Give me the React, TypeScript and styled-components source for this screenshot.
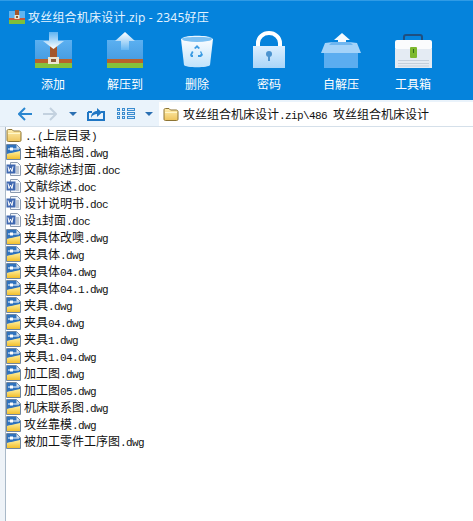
import React from 'react';
import styled, { createGlobalStyle } from 'styled-components';

const GlobalStyle = createGlobalStyle`
  html, body {
    margin: 0;
    padding: 0;
    background: #ffffff;
  }
`;

const Window = styled.div`
  width: 473px;
  height: 521px;
  overflow: hidden;
  display: flex;
  flex-direction: column;
  font-family: 'Noto Sans CJK SC', 'Liberation Sans', sans-serif;
`;

const Header = styled.header`
  height: 100px;
  background: #0583dc;
  border-top: 1px solid #2f9be6;
  box-sizing: border-box;
  display: flex;
  flex-direction: column;
`;

const TitleBar = styled.div`
  height: 28px;
  padding: 4px 0 0 9px;
  box-sizing: border-box;
  display: flex;
  align-items: center;
  gap: 3px;
  color: #e6f4ff;
  font-size: 12px;
  letter-spacing: 0.2px;
  font-family: 'Open Sans', 'Noto Sans CJK SC', sans-serif;
`;

const Tools = styled.div`
  display: flex;
  padding-left: 17px;
  margin-top: -1px;
`;

const Tool = styled.div`
  width: 72px;
  display: flex;
  flex-direction: column;
  align-items: center;
  color: #ffffff;
  font-size: 12px;
  line-height: 16px;
`;

const ToolIcon = styled.svg`
  display: block;
  width: 48px;
  height: 44px;
  margin-bottom: 4px;
`;

const NavBar = styled.nav`
  height: 27px;
  background: #eaf3fb;
  border-bottom: 1px solid #d5e0ea;
  box-sizing: border-box;
  display: flex;
  align-items: center;
  padding: 1px 0 0 18px;
`;

const NavIcon = styled.svg<{ $gap: number }>`
  display: block;
  flex: none;
  margin-right: ${(p) => p.$gap}px;
`;

const AddressBox = styled.div`
  flex: 1;
  height: 24px;
  background: #ffffff;
  display: flex;
  align-items: center;
  padding-left: 4px;
  gap: 4px;
  font-size: 12px;
  color: #111111;
  white-space: nowrap;
`;

const Body = styled.main`
  flex: 1;
  display: flex;
`;

const Gutter = styled.div`
  width: 5px;
  flex: none;
  background: #eef3f8;
  border-right: 1px solid #a9b9c8;
`;

const FileList = styled.ul`
  list-style: none;
  margin: 0;
  padding: 0;
  display: flex;
  flex-direction: column;
`;

const FileRow = styled.li`
  height: 17px;
  box-sizing: border-box;
  padding-bottom: 2px;
  display: flex;
  align-items: center;
  gap: 3px;
  font-size: 12px;
  color: #111111;
  white-space: nowrap;
`;

const Latin = styled.span`
  font-family: 'Liberation Mono', monospace;
  font-size: 11px;
  letter-spacing: -0.6px;
`;

const FileGlyph = styled.svg`
  display: block;
  flex: none;
  width: 15px;
  height: 16px;
`;

const Gradients = () => (
  <svg width="0" height="0" style={{ position: 'absolute' }}>
    <defs>
      <linearGradient id="arrowDown" x1="0" y1="0" x2="0" y2="1">
        <stop offset="0" stopColor="#5fb4f2" />
        <stop offset="1" stopColor="#ffffff" />
      </linearGradient>
      <linearGradient id="arrowUp" x1="0" y1="0" x2="0" y2="1">
        <stop offset="0" stopColor="#ffffff" />
        <stop offset="1" stopColor="#66b6f2" />
      </linearGradient>
      <linearGradient id="bodyBlue" x1="0" y1="0" x2="0" y2="1">
        <stop offset="0" stopColor="#5bb0f1" />
        <stop offset="1" stopColor="#3f95dc" />
      </linearGradient>
      <linearGradient id="lockBlue" x1="0" y1="0" x2="0" y2="1">
        <stop offset="0" stopColor="#dcefff" />
        <stop offset="1" stopColor="#a9d5f8" />
      </linearGradient>
      <linearGradient id="binBlue" x1="0" y1="0" x2="0" y2="1">
        <stop offset="0" stopColor="#ffffff" />
        <stop offset="1" stopColor="#bfe2fb" />
      </linearGradient>
      <linearGradient id="folderGold" x1="0" y1="0" x2="0" y2="1">
        <stop offset="0" stopColor="#ffeeb0" />
        <stop offset="1" stopColor="#eec45c" />
      </linearGradient>
      <linearGradient id="dwgGold" x1="0" y1="0" x2="0" y2="1">
        <stop offset="0" stopColor="#fff0a0" />
        <stop offset="1" stopColor="#f2bf2c" />
      </linearGradient>
    </defs>
  </svg>
);

const AddIcon = () => (
  <ToolIcon viewBox="0 0 48 44">
    <path d="M6 12h37v28H6z" fill="url(#bodyBlue)" />
    <path d="M6 31h37v4H6z" fill="#b9622c" />
    <path d="M6 35h37v5H6z" fill="#86c23c" />
    <path d="M21 16l3.500 3 3.500-3v16h-7z" fill="#a4562a" />
    <path d="M19 29h11v7H19z" fill="#efe6d2" />
    <path d="M22 31h5v3h-5z" fill="#8a5a38" />
    <path d="M20 4h9v9h6L24.500 21 14 13h6z" fill="url(#arrowDown)" />
  </ToolIcon>
);

const ExtractIcon = () => (
  <ToolIcon viewBox="0 0 48 44">
    <path d="M6 12h36v28H6z" fill="url(#bodyBlue)" />
    <path d="M6 31h36v4H6z" fill="#b9622c" />
    <path d="M6 35h36v5H6z" fill="#86c23c" />
    <path d="M24 4l10 9h-6v9h-8v-9h-6z" fill="url(#arrowUp)" />
  </ToolIcon>
);

const DeleteIcon = () => (
  <ToolIcon viewBox="0 0 48 44">
    <path d="M8 11c3-3 29-3 32 0l-3 26c-1 3-25 3-26 0z" fill="url(#binBlue)" />
    <ellipse cx="24" cy="11" rx="15" ry="3" fill="#7cc0f2" />
    <path d="M9 10c4-3 26-3 30 0-4-1.500-26-1.500-30 0z" fill="#e9f6ff" />
    <path d="M21 20l3-3 3 3-1.500 1L24 19.500 22.500 21zM28 23l2 4-2 2h-3v-2h2l1-1.500-1-1.500zM20 29h-2l-1-2 2-4 1.500 1-1.500 3h1z" fill="#3a9ae2" />
  </ToolIcon>
);

const LockIcon = () => (
  <ToolIcon viewBox="0 0 48 44">
    <path d="M13 19v-4a11 10 0 0 1 22 0v4" fill="none" stroke="#ffffff" strokeWidth="4" />
    <path d="M8 18h32v22H8z" fill="url(#lockBlue)" />
    <circle cx="24" cy="26" r="3" fill="#4c93cf" />
    <path d="M23 27h2v6h-2z" fill="#4c93cf" />
  </ToolIcon>
);

const SelfExtractIcon = () => (
  <ToolIcon viewBox="0 0 48 44">
    <path d="M25 5l8 7h-4v7h-8v-7h-4z" fill="#f4fafe" />
    <path d="M7 22h34v18H7z" fill="#5badf0" />
    <path d="M8 15l8-1h16l8 1 4 10H4z" fill="#a4d3f9" />
    <path d="M15 14h18l3 3H12z" fill="#6fb6f0" />
  </ToolIcon>
);

const ToolboxIcon = () => (
  <ToolIcon viewBox="0 0 48 44">
    <path d="M15 12V9c0-1 1-2 2-2h14c1 0 2 1 2 2v3" fill="none" stroke="#1f4f80" strokeWidth="2" />
    <rect x="6" y="12" width="37" height="10" rx="2" fill="#fbfcfd" />
    <path d="M6 21h37v19H6z" fill="#e4ebf3" />
    <path d="M9 32h31v1H9zM9 35h31v1H9zM9 37.500h31v1H9z" fill="#c4cfdb" />
    <rect x="21" y="19" width="7" height="11" rx="1" fill="#7cb82f" />
    <path d="M24 21h1v4h-1z" fill="#2f6a1b" />
  </ToolIcon>
);

const AppGlyph = () => (
  <svg width="16" height="14" viewBox="0 0 16 14">
    <path d="M0 1h16v13H0z" fill="#5fb4f0" />
    <path d="M0 8h16v2H0z" fill="#c8583a" />
    <path d="M0 10h16v4H0z" fill="#7fbf3a" />
    <path d="M6 0h4v8H6z" fill="#a4562a" />
    <path d="M5.500 5h5v4h-5z" fill="#f0e4cf" />
    <path d="M7 6h2v2H7z" fill="#8a5a38" />
  </svg>
);

const FolderGlyph = ({ size = 16 }: { size?: number }) => (
  <FileGlyph viewBox="0 0 15 16" style={{ width: size, height: size }}>
    <path d="M.5 13V4c0-1 .5-1.500 1.500-1.500h3.500l1.500 1.500h5.500c1 0 2 .5 2 1.500V13c0 1-.5 1.500-1.500 1.500H2c-1 0-1.500-.5-1.500-1.500z" fill="url(#folderGold)" stroke="#8c7434" />
    <path d="M1.500 6.500h12" stroke="#fff6c8" />
  </FileGlyph>
);

const DwgGlyph = () => (
  <FileGlyph viewBox="0 0 15 16">
    <path d="M.5 .5h10l4 4v11H.5z" fill="#ffffff" stroke="#6f86a0" />
    <path d="M1 1h9.500L14 4.500V8L1 10z" fill="#2f72bd" />
    <path d="M1 10l13-3v8H1z" fill="url(#dwgGold)" />
    <path d="M2 5h11" stroke="#ffffff" />
    <rect x="4" y="3.500" width="3" height="3" fill="#ffffff" />
    <path d="M10.500 1L14 4.500h-3.500z" fill="#dce6f0" />
  </FileGlyph>
);

const DocGlyph = () => (
  <FileGlyph viewBox="0 0 15 16">
    <path d="M4.500 1.500h7l3 3v10h-10z" fill="#f4f7fb" stroke="#8a9ab0" />
    <path d="M10 6h3M10 8h3M10 10h3M10 12h3" stroke="#8a9ab0" />
    <rect x=".5" y="3.500" width="9" height="9" fill="#3f68b0" />
    <path d="M2 5.500l1 5 1.500-3.500L6 10.500l1-5" fill="none" stroke="#ffffff" />
  </FileGlyph>
);

const BackIcon = () => (
  <NavIcon $gap={11} width="14" height="14" viewBox="0 0 14 14">
    <path d="M7 1L1 7l6 6M1 7h13" fill="none" stroke="#2a86d0" strokeWidth="2" />
  </NavIcon>
);

const ForwardIcon = () => (
  <NavIcon $gap={12} width="14" height="14" viewBox="0 0 14 14">
    <path d="M7 1l6 6-6 6M13 7H0" fill="none" stroke="#c3d1df" strokeWidth="2" />
  </NavIcon>
);

const Caret = ({ gap }: { gap: number }) => (
  <NavIcon $gap={gap} width="8" height="4" viewBox="0 0 8 4">
    <path d="M0 0h8L4 4z" fill="#2a6fb2" />
  </NavIcon>
);

const UpIcon = () => (
  <NavIcon $gap={12} width="18" height="14" viewBox="0 0 18 14">
    <path d="M1 5v8h16V5h-3M1 5h4" fill="none" stroke="#1f76c4" strokeWidth="2" />
    <path d="M4 11c0-5 3-7 6-7V1l5 4.500L10 10V7c-2 0-5 1-6 4z" fill="#1f76c4" />
  </NavIcon>
);

const GridIcon = () => (
  <NavIcon $gap={10} width="18" height="11" viewBox="0 0 18 11">
    <path d="M0 0h3v3H0zM5 0h3v3H5zM10 0h8v3h-8zM0 4h3v3H0zM5 4h3v3H5zM10 4h8v3h-8zM0 8h3v3H0zM5 8h3v3H5zM10 8h8v3h-8z" fill="#3b8ccf" />
    <path d="M1 1h1v1H1zM6 1h1v1H6zM11 1h6v1h-6zM1 5h1v1H1zM6 5h1v1H6zM11 5h6v1h-6zM1 9h1v1H1zM6 9h1v1H6zM11 9h6v1h-6z" fill="#dbeafa" />
  </NavIcon>
);

const tools = [
  { label: '添加', icon: <AddIcon /> },
  { label: '解压到', icon: <ExtractIcon /> },
  { label: '删除', icon: <DeleteIcon /> },
  { label: '密码', icon: <LockIcon /> },
  { label: '自解压', icon: <SelfExtractIcon /> },
  { label: '工具箱', icon: <ToolboxIcon /> },
];

const files: { name: string; kind: 'folder' | 'dwg' | 'doc' }[] = [
  { name: '..(上层目录)', kind: 'folder' },
  { name: '主轴箱总图.dwg', kind: 'dwg' },
  { name: '文献综述封面.doc', kind: 'doc' },
  { name: '文献综述.doc', kind: 'doc' },
  { name: '设计说明书.doc', kind: 'doc' },
  { name: '设1封面.doc', kind: 'doc' },
  { name: '夹具体改噢.dwg', kind: 'dwg' },
  { name: '夹具体.dwg', kind: 'dwg' },
  { name: '夹具体04.dwg', kind: 'dwg' },
  { name: '夹具体04.1.dwg', kind: 'dwg' },
  { name: '夹具.dwg', kind: 'dwg' },
  { name: '夹具04.dwg', kind: 'dwg' },
  { name: '夹具1.dwg', kind: 'dwg' },
  { name: '夹具1.04.dwg', kind: 'dwg' },
  { name: '加工图.dwg', kind: 'dwg' },
  { name: '加工图05.dwg', kind: 'dwg' },
  { name: '机床联系图.dwg', kind: 'dwg' },
  { name: '攻丝靠模.dwg', kind: 'dwg' },
  { name: '被加工零件工序图.dwg', kind: 'dwg' },
];

// latin runs take half the CJK width, like the bitmap font in the file list
const MixedText = ({ text }: { text: string }) => (
  <>
    {text.split(/([0-9.\\a-z ()]+)/).map((part, i) =>
      /^[0-9.\\a-z ()]+$/.test(part) ? <Latin key={i}>{part}</Latin> : part
    )}
  </>
);

const glyphFor = (kind: string) => {
  if (kind === 'folder') return <FolderGlyph />;
  if (kind === 'doc') return <DocGlyph />;
  return <DwgGlyph />;
};

const App = () => {
  return (
    <Window>
      <GlobalStyle />
      <Gradients />
      <Header>
        <TitleBar>
          <AppGlyph />
          攻丝组合机床设计.zip - 2345好压
        </TitleBar>
        <Tools>
          {tools.map((tool) => (
            <Tool key={tool.label}>
              {tool.icon}
              {tool.label}
            </Tool>
          ))}
        </Tools>
      </Header>
      <NavBar>
        <BackIcon />
        <ForwardIcon />
        <Caret gap={10} />
        <UpIcon />
        <GridIcon />
        <Caret gap={6} />
        <AddressBox>
          <FolderGlyph />
          <span>
            <MixedText text="攻丝组合机床设计.zip\486 攻丝组合机床设计" />
          </span>
        </AddressBox>
      </NavBar>
      <Body>
        <Gutter />
        <FileList>
          {files.map((file) => (
            <FileRow key={file.name}>
              {glyphFor(file.kind)}
              <span>
                <MixedText text={file.name} />
              </span>
            </FileRow>
          ))}
        </FileList>
      </Body>
    </Window>
  );
};

export default App;
